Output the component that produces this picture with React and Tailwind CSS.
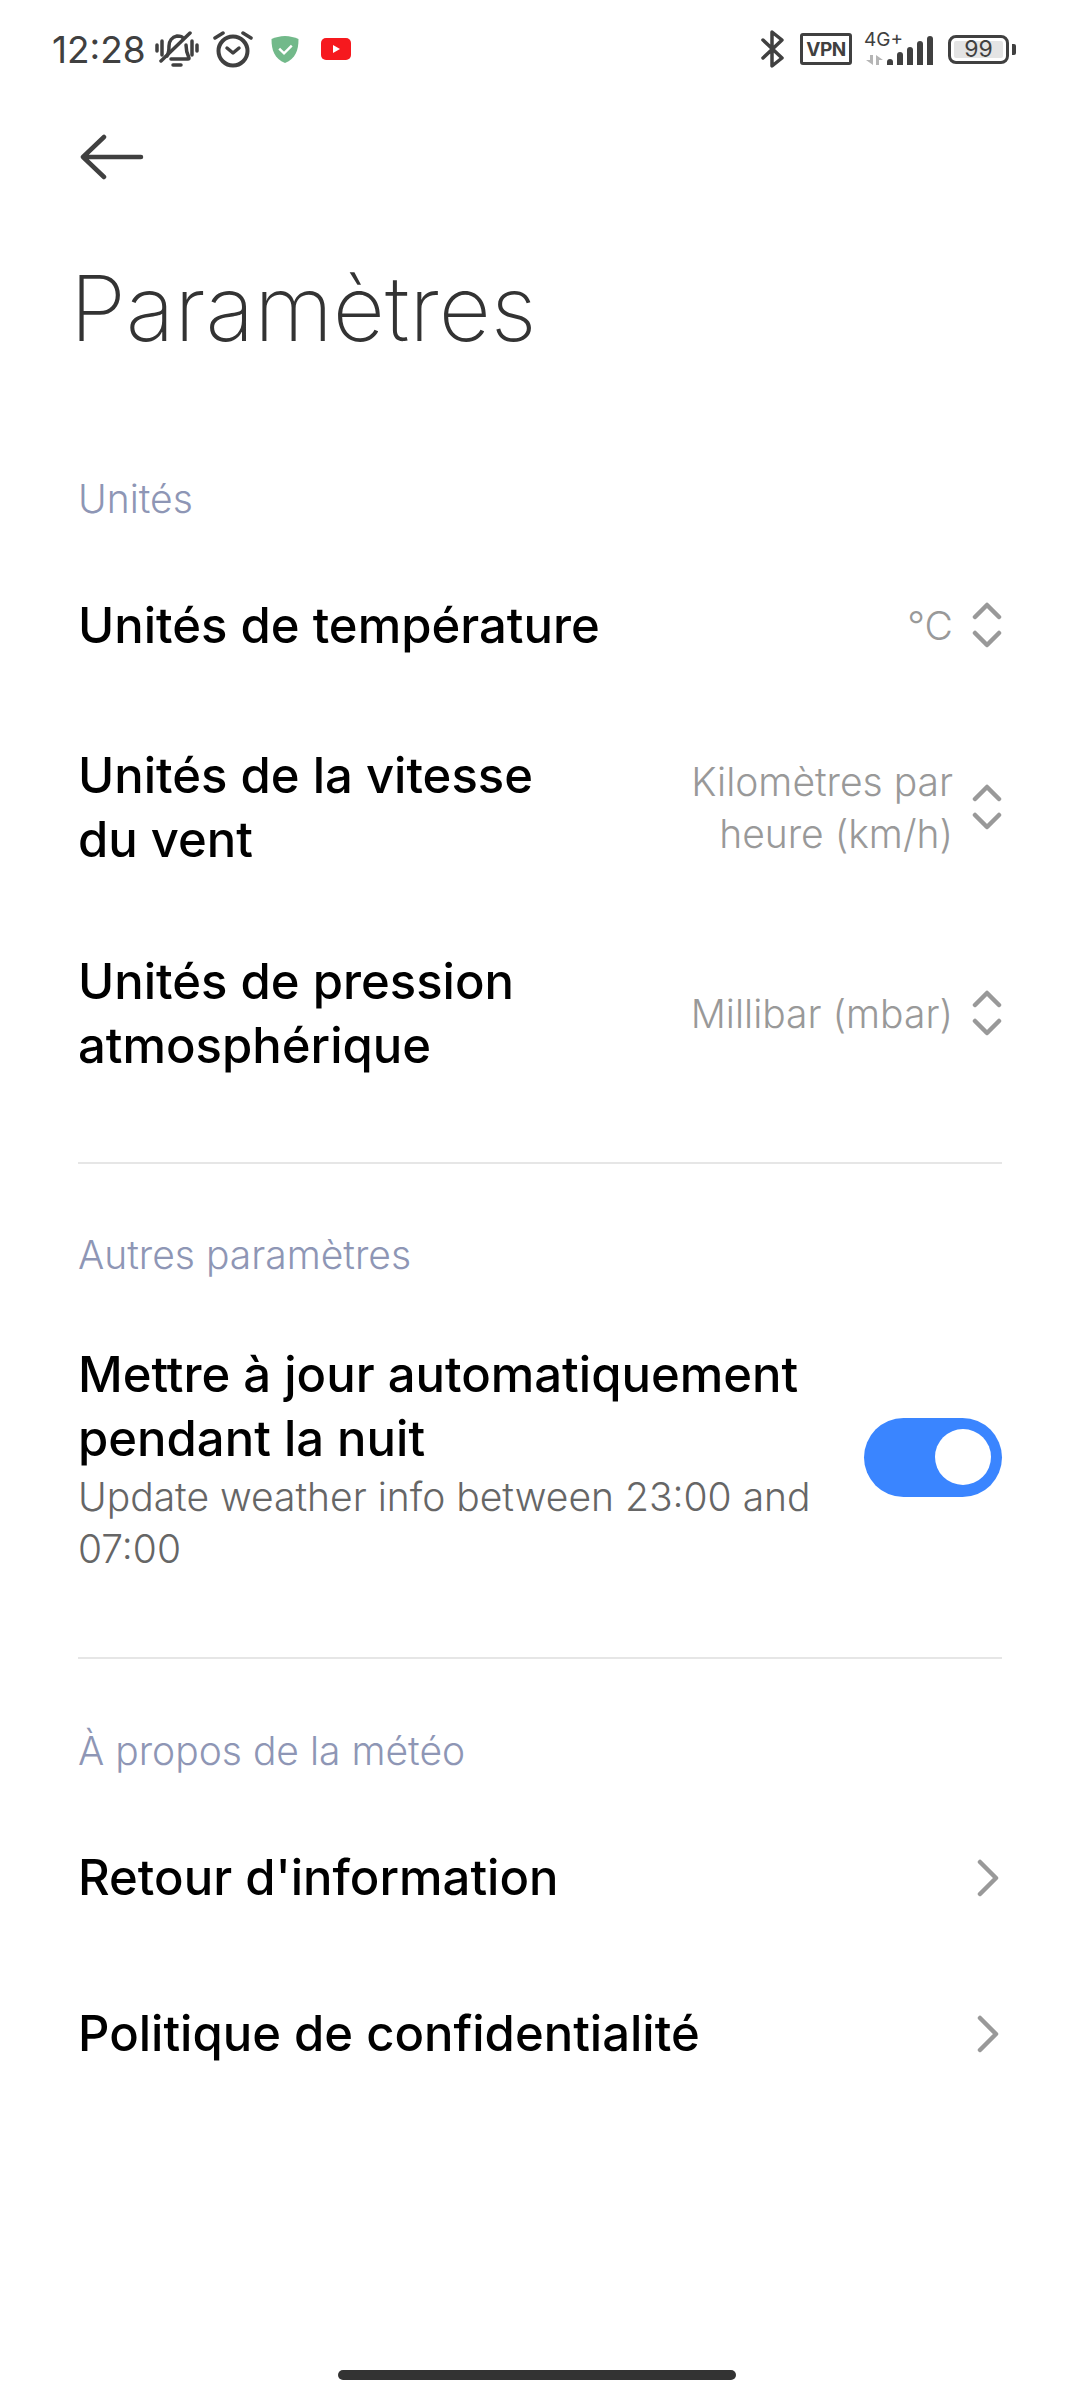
const font = { fontFamily: "Inter, 'Noto Sans', sans-serif" }

function BellOff() {
    return (
        <svg width="44" height="37" viewBox="0 0 44 37" fill="none" stroke="#404040" strokeWidth="3.500" strokeLinecap="round" strokeLinejoin="round">
            <path d="M2 14v6M7 10v14M37 10v14M42 14v6" />
            <path d="M12 25c2-3 2-6 2-10 0-5 3-9 8-10 2 0 5 0 6 2M31 14c0 5 1 9 3 13 0 1 0 1-1 1H16" />
            <path d="M35 2 6 30" />
            <path d="M18 34h8" />
        </svg>
    )
}

function Alarm() {
    return (
        <svg width="40" height="38" viewBox="0 0 40 38" fill="none" stroke="#404040" strokeWidth="3.500" strokeLinecap="round" strokeLinejoin="round">
            <circle cx="20" cy="21" r="14.500" strokeWidth="4" />
            <path d="M14 18l6 5 6-5" />
            <path d="M2 8l8-5M38 8l-8-5" />
        </svg>
    )
}

function Shield() {
    return (
        <svg width="28" height="27" viewBox="0 0 28 28">
            <path d="M14 0C9 0 4 1.500 0 3c0 12 3 20 14 25C25 23 28 15 28 3 24 1.500 19 0 14 0z" fill="#72b98a" />
            <path d="M8 13l5 5 8-8" fill="none" stroke="#fff" strokeWidth="2.500" />
        </svg>
    )
}

function Youtube() {
    return (
        <svg width="30" height="22" viewBox="0 0 30 22">
            <rect width="30" height="22" rx="5" fill="#f6191e" />
            <path d="M12 7l7 4-7 4z" fill="#fff" />
        </svg>
    )
}

function Bluetooth() {
    return (
        <svg width="24" height="38" viewBox="0 0 24 38" fill="none" stroke="#404040" strokeWidth="3.500" strokeLinecap="round" strokeLinejoin="round">
            <path d="M2 10l19 18-10 8V2l10 8L2 28" />
        </svg>
    )
}

function Signal() {
    return (
        <div className="flex items-end gap-[3.500px] h-[29px]">
            <span className="w-[6.500px] h-[6px] rounded-t-[3px] bg-[#404040]" />
            <span className="w-[6.500px] h-[13px] rounded-t-[3px] bg-[#404040]" />
            <span className="w-[6.500px] h-[18px] rounded-t-[3px] bg-[#404040]" />
            <span className="w-[6.500px] h-[24px] rounded-t-[3px] bg-[#404040]" />
            <span className="w-[6.500px] h-[29px] rounded-t-[3px] bg-[#404040]" />
        </div>
    )
}

function DataArrows() {
    return (
        <svg className="absolute left-[2px] bottom-0" width="17" height="10" viewBox="0 0 17 10" fill="#b5b5b5">
            <path d="M4 0h3v10L0 5h4zM10 10h3V5h4l-7-5z" />
        </svg>
    )
}

function StatusBar() {
    return (
        <div className="h-[98px] pl-[52px] pr-[64px] flex items-center justify-between text-[#404040]">
            <div className="flex items-center">
                <span className="text-[37px] leading-none w-[103px]">12:28</span>
                <BellOff />
                <span className="w-[14px]" />
                <Alarm />
                <span className="w-[18px]" />
                <Shield />
                <span className="w-[22px]" />
                <Youtube />
            </div>
            <div className="flex items-center">
                <Bluetooth />
                <span className="w-[15px]" />
                <div className="w-[52px] h-[32px] border-[3px] border-[#404040] rounded-[3px] flex items-center justify-center text-[19px] font-bold leading-none tracking-[-0.5px]">VPN</div>
                <span className="w-[12px]" />
                <div className="relative w-[69px] h-[32px] flex justify-end items-end">
                    <span className="absolute left-0 -top-[2px] text-[19px] leading-[18px]">4G+</span>
                    <DataArrows />
                    <Signal />
                </div>
                <span className="w-[15px]" />
                <div className="w-[61px] h-[29px] border-[3px] border-[#404040] rounded-[8px] p-[3px] flex">
                    <div className="flex-1 bg-[#e4e4e4] rounded-[2px] flex items-center justify-center text-[23px] leading-none">99</div>
                </div>
                <span className="ml-[3px] w-[4px] h-[11px] rounded-r-[2px] bg-[#404040]" />
            </div>
        </div>
    )
}

function UpDown() {
    return (
        <svg className="shrink-0 -mt-[2px]" width="30" height="46" viewBox="0 0 30 46" fill="none" stroke="#999" strokeWidth="4.500" strokeLinecap="round" strokeLinejoin="round">
            <path d="M3 15 15 3l12 12M3 31l12 12 12-12" />
        </svg>
    )
}

function Chevron() {
    return (
        <svg className="shrink-0 mr-[3px]" width="22" height="38" viewBox="0 0 22 38" fill="none" stroke="#999" strokeWidth="4.500" strokeLinecap="round" strokeLinejoin="round">
            <path d="M3 3l16 16L3 35" />
        </svg>
    )
}

function SectionLabel({ children, className }) {
    return <div className={"text-[39px] leading-[48px] font-light text-[#8e96b5] " + className}>{children}</div>
}

function SelectRow({ title, value, className }) {
    return (
        <div className={"flex items-center justify-between " + className}>
            <div className="text-[49px] leading-[64px] font-medium text-black whitespace-nowrap">{title}</div>
            <div className="flex items-center">
                <div className="text-[39px] leading-[52px] font-light text-[#999] text-right mr-[19px]">{value}</div>
                <UpDown />
            </div>
        </div>
    )
}

function LinkRow({ title, className }) {
    return (
        <div className={"flex items-center justify-between " + className}>
            <div className="text-[49px] leading-[64px] font-medium text-black">{title}</div>
            <Chevron />
        </div>
    )
}

export default function App() {
    return (
        <div className="w-[1080px] h-[2400px] bg-white flex flex-col relative overflow-hidden" style={font}>
            <StatusBar />

            <div className="px-[78px]">
                <svg className="mt-[36px] ml-[2px]" width="64" height="46" viewBox="0 0 64 46" fill="none" stroke="#404040" strokeWidth="4.500" strokeLinecap="round" strokeLinejoin="round">
                    <path d="M24 3 3 23l21 20M3 23h58" />
                </svg>

                <h1 className="mt-[73px] -ml-[8px] text-[90.500px] leading-[110px] font-extralight text-[#333]">Paramètres</h1>

                <SectionLabel className="mt-[112px]">Unités</SectionLabel>

                <SelectRow className="mt-[71px]" title="Unités de température" value="°C" />
                <SelectRow className="mt-[86px]" title={<>Unités de la vitesse<br />du vent</>} value={<>Kilomètres par<br />heure (km/h)</>} />
                <SelectRow className="mt-[78px]" title={<>Unités de pression<br />atmosphérique</>} value="Millibar (mbar)" />

                <div className="mt-[84px] h-[2px] bg-[#e6e6e6]" />

                <SectionLabel className="mt-[67px]">Autres paramètres</SectionLabel>

                <div className="mt-[64px] flex items-center justify-between">
                    <div className="w-[760px]">
                        <div className="text-[49px] leading-[64px] font-medium text-black">Mettre à jour automatiquement<br />pendant la nuit</div>
                        <div className="text-[39px] leading-[52px] font-light text-[#666]">Update weather info between 23:00 and 07:00</div>
                    </div>
                    <div className="w-[138px] h-[79px] rounded-full bg-[#3a85ff] flex items-center justify-end pr-[11px] -mt-[4px]">
                        <span className="w-[56px] h-[56px] rounded-full bg-white" />
                    </div>
                </div>

                <div className="mt-[82px] h-[2px] bg-[#e6e6e6]" />

                <SectionLabel className="mt-[68px]">À propos de la météo</SectionLabel>

                <LinkRow className="mt-[71px]" title="Retour d'information" />
                <LinkRow className="mt-[92px]" title="Politique de confidentialité" />
            </div>

            <div className="absolute bottom-[20px] left-[338px] w-[398px] h-[10px] rounded-full bg-[#333]" />
        </div>
    )
}
